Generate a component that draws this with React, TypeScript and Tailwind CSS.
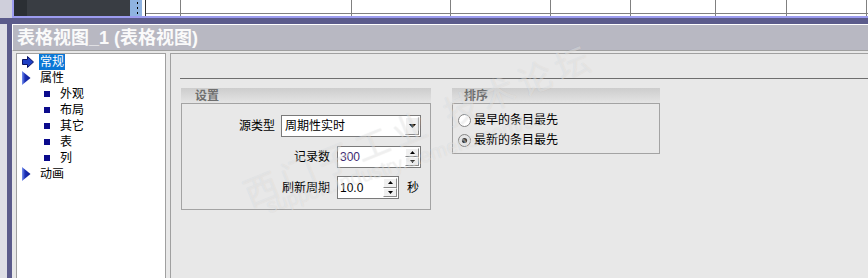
import React from "react";

function ArrowIcon() {
  return (
    <svg width="12" height="12" viewBox="0 0 12 12">
      <path d="M0.5 3.5 H5.5 V0.5 L11.5 6 L5.5 11.5 V8.5 H0.5 Z" fill="#1f3fc4" stroke="#0a1466" strokeWidth="1" />
    </svg>
  );
}

function TriIcon() {
  return (
    <svg width="9" height="14" viewBox="0 0 9 14">
      <defs>
        <linearGradient id="tg" x1="0" y1="0" x2="1" y2="0">
          <stop offset="0" stopColor="#7b95f0" />
          <stop offset="0.35" stopColor="#1a30b8" />
          <stop offset="1" stopColor="#0c1a8e" />
        </linearGradient>
      </defs>
      <polygon points="0,0 8.5,7 0,14" fill="url(#tg)" />
    </svg>
  );
}

function Radio({ checked }: { checked?: boolean }) {
  return (
    <svg width="13" height="13" viewBox="0 0 13 13">
      <circle cx="6.5" cy="6.5" r="6" fill={checked ? "#e6e6e6" : "#ffffff"} stroke="#858585" strokeWidth="1" />
      {checked && <circle cx="6.5" cy="6.5" r="2.6" fill="#3c3c3c" />}
    </svg>
  );
}

function Down({ w = 7, h = 4 }: { w?: number; h?: number }) {
  return (
    <svg width={w} height={h} viewBox={`0 0 ${w} ${h}`}>
      <polygon points={`0,0 ${w},0 ${w / 2},${h}`} fill="#000" />
    </svg>
  );
}

function Up({ w = 5, h = 3 }: { w?: number; h?: number }) {
  return (
    <svg width={w} height={h} viewBox={`0 0 ${w} ${h}`}>
      <polygon points={`0,${h} ${w},${h} ${w / 2},0`} fill="#000" />
    </svg>
  );
}

function SpinButtons() {
  return (
    <div className="my-[1px] mr-[1px] flex w-[14px] flex-col">
      <div className="flex flex-1 items-center justify-center border border-t-white border-l-white border-r-[#8a8a8a] border-b-[#8a8a8a] bg-[#f0f0f0]">
        <Up />
      </div>
      <div className="flex flex-1 items-center justify-center border border-t-white border-l-white border-r-[#8a8a8a] border-b-[#8a8a8a] bg-[#f0f0f0]">
        <Down w={5} h={3} />
      </div>
    </div>
  );
}

function TreeTop({ icon, label, selected }: { icon: React.ReactNode; label: string; selected?: boolean }) {
  return (
    <div className="flex h-[16px] items-center">
      <div className="flex w-[12px] items-center justify-start">{icon}</div>
      <div className="w-[5px]" />
      <span className={selected ? "flex h-[16px] items-center bg-[#0a77d6] px-[1px] text-white" : "flex h-[16px] items-center px-[1px]"}>
        {label}
      </span>
    </div>
  );
}

function TreeChild({ label }: { label: string }) {
  return (
    <div className="flex h-[16px] items-center">
      <div className="ml-[22px] h-[6px] w-[6px] bg-[#0b0b8c]" />
      <span className="ml-[10px]">{label}</span>
    </div>
  );
}

export default function App() {
  return (
    <div className="relative h-[278px] w-[868px] overflow-hidden bg-[#e8e8e8] font-['Liberation_Sans','Noto_Sans_CJK_SC',sans-serif] text-[12px] leading-none text-black">
      {/* upper window strip */}
      <div className="flex h-[18px]">
        <div className="w-[12px] bg-[#cfcfdb]" />
        <div className="flex flex-1 flex-col">
          <div className="flex h-[16px] border-l-2 border-[#9c9cf0]">
            <div className="w-[13px] bg-[#2b2f34]" />
            <div className="w-[103px] bg-[#393d43]" />
            <div className="relative w-[12px] bg-[#8fb3e1]">
              <div className="absolute left-[7px] top-[2px] h-[2px] w-[1px] bg-black" />
              <div className="absolute left-[7px] top-[7px] h-[2px] w-[1px] bg-black" />
              <div className="absolute left-[7px] top-[12px] h-[2px] w-[1px] bg-black" />
            </div>
            <div className="w-[3px] bg-white" />
            <div className="flex flex-1 border-l border-[#303030] bg-white">
              <div className="w-[34px]"><div className="h-[14px] border-b border-[#808080]" /></div>
              <div className="w-[171px] border-l border-[#808080]"><div className="h-[14px] border-b border-[#808080]" /></div>
              <div className="w-[99px] border-l border-[#808080]"><div className="h-[14px] border-b border-[#808080]" /></div>
              <div className="w-[100px] border-l border-[#808080]"><div className="h-[14px] border-b border-[#808080]" /></div>
              <div className="w-[80px] border-l border-[#808080]"><div className="h-[14px] border-b border-[#808080]" /></div>
              <div className="w-[85px] border-l border-[#808080]"><div className="h-[14px] border-b border-[#808080]" /></div>
              <div className="w-[71px] border-l border-[#808080]"><div className="h-[14px] border-b border-[#808080]" /></div>
              <div className="w-[80px] border-l border-[#808080]"><div className="h-[14px] border-b border-[#808080]" /></div>
              <div className="flex-1 border-l border-[#808080]"><div className="h-[14px] border-b border-[#808080]" /></div>
            </div>
          </div>
          <div className="h-[2px] bg-[#9c9cf0]" />
        </div>
      </div>
      <div className="h-[6px] bg-[#5b5b8b]" />

      {/* lower window */}
      <div className="flex h-[254px]">
        <div className="w-[7px] bg-[#dedee6]" />
        <div className="w-[5px] bg-[#5b5b8b]" />
        <div className="flex min-w-0 flex-1 flex-col">
          <div className="flex h-[27px] items-center border-l border-t border-b border-l-white border-t-white border-b-[#a0a0a0] bg-[#b8b8c2] pl-[4px]">
            <span className="text-[18px] font-bold text-[#fafafa]">表格视图_1 (表格视图)</span>
          </div>
          <div className="flex flex-1 gap-[4px] pl-[4px] pt-[2px]">
            {/* tree */}
            <div className="w-[150px] border border-b-0 border-[#a0a0a0] bg-white pl-[5px]">
              <TreeTop icon={<ArrowIcon />} label="常规" selected />
              <TreeTop icon={<TriIcon />} label="属性" />
              <TreeChild label="外观" />
              <TreeChild label="布局" />
              <TreeChild label="其它" />
              <TreeChild label="表" />
              <TreeChild label="列" />
              <TreeTop icon={<TriIcon />} label="动画" />
            </div>
            {/* right panel */}
            <div className="flex min-w-0 flex-1 flex-col border-l border-t border-[#a0a0a0]">
              <div className="ml-[9px] mt-[24px] h-[1px] bg-[#6e6e6e]" />
              <div className="ml-[10px] mt-[9px] flex gap-[21px]">
                {/* 设置 group */}
                <div className="w-[250px]">
                  <div className="flex h-[15px] items-center bg-gradient-to-b from-[#cdcdcd] to-[#e4e4e4] pl-[14px]">
                    <span className="text-[12px] font-bold text-[#6f6f6f]">设置</span>
                  </div>
                  <div className="h-[107px] border border-[#a3a3a3] pt-[11px]">
                    <div className="flex h-[22px] items-center">
                      <div className="w-[93px] text-right">源类型</div>
                      <div className="ml-[6px] flex h-[22px] w-[140px] border border-[#7a7a7a] bg-white">
                        <div className="flex flex-1 items-center pl-[3px]">周期性实时</div>
                        <div className="my-[1px] mr-[1px] flex w-[14px] items-center justify-center border border-t-white border-l-white border-r-[#8a8a8a] border-b-[#8a8a8a] bg-[#f0f0f0]">
                          <Down />
                        </div>
                      </div>
                    </div>
                    <div className="mt-[9px] flex h-[22px] items-center">
                      <div className="w-[148px] text-right">记录数</div>
                      <div className="ml-[7px] flex h-[22px] w-[84px] border border-[#7a7a7a] bg-white">
                        <div className="flex flex-1 items-center pl-[2px] text-[#3c2a70]">300</div>
                        <SpinButtons />
                      </div>
                    </div>
                    <div className="mt-[8px] flex h-[23px] items-center">
                      <div className="w-[148px] text-right">刷新周期</div>
                      <div className="ml-[7px] flex h-[23px] w-[62px] border border-[#7a7a7a] bg-white">
                        <div className="flex flex-1 items-center pl-[2px]">10.0</div>
                        <SpinButtons />
                      </div>
                      <span className="ml-[8px]">秒</span>
                    </div>
                  </div>
                </div>
                {/* 排序 group */}
                <div className="w-[208px]">
                  <div className="flex h-[15px] items-center bg-gradient-to-b from-[#cdcdcd] to-[#e4e4e4] pl-[12px]">
                    <span className="text-[12px] font-bold text-[#6f6f6f]">排序</span>
                  </div>
                  <div className="h-[51px] border border-[#a3a3a3] pl-[5px] pt-[6px]">
                    <div className="flex h-[20px] items-center gap-[3px]">
                      <Radio />
                      <span>最早的条目最先</span>
                    </div>
                    <div className="flex h-[20px] items-center gap-[3px]">
                      <Radio checked />
                      <span>最新的条目最先</span>
                    </div>
                  </div>
                </div>
              </div>
            </div>
          </div>
        </div>
      </div>

      {/* faint watermark */}
      <div className="pointer-events-none absolute left-[252px] top-[178px] origin-bottom-left -rotate-[22deg] whitespace-nowrap text-[34px] tracking-[6px] text-white/40 [text-shadow:0_0_1px_rgba(0,0,0,0.1)]">
        西门子工业 技术论坛
      </div>
      <div className="pointer-events-none absolute left-[270px] top-[196px] origin-bottom-left -rotate-[18deg] whitespace-nowrap text-[20px] text-white/40 [text-shadow:0_0_1px_rgba(0,0,0,0.1)]">
        support.industry.siemens.com/cs
      </div>
    </div>
  );
}
